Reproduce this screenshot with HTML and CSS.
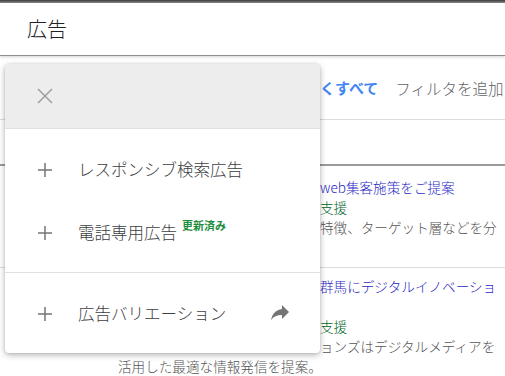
FILE: index.html
```html
<!DOCTYPE html>
<html lang="ja">
<head>
  <meta charset="UTF-8" />
  <meta name="viewport" content="width=device-width, initial-scale=1" />
  <title>広告</title>
  <link rel="stylesheet" href="styles.css">
</head>
<body>
  <div class="topbar"></div>
  <div class="header">広告</div>

  <div class="filters">
    <span class="scope">くすべて</span>
    <span class="add-filter">フィルタを追加</span>
  </div>
  <div class="thead"></div>

  <div class="ad-row first">
    <div class="ln blue"><span class="under"></span>web集客施策をご提案</div>
    <div class="ln green"><span class="under"></span>支援</div>
    <div class="ln gray"><span class="under"></span>特徴、ターゲット層などを分</div>
  </div>
  <div class="ad-row second">
    <div class="ln blue"><span class="under"></span>群馬にデジタルイノベーショ</div>
    <div class="ln"></div>
    <div class="ln green"><span class="under"></span>支援</div>
    <div class="ln gray"><span class="under"></span>ョンズはデジタルメディアを</div>
    <div class="ln gray">活用した最適な情報発信を提案。</div>
  </div>

  <div class="menu">
    <div class="menu-head">
      <svg class="close" width="16" height="16" viewBox="0 0 16 16"><path d="M1 1L15 15M15 1L1 15" stroke="#9e9e9e" stroke-width="1.5" fill="none"/></svg>
    </div>
    <div class="menu-group">
      <div class="item">
        <svg class="plus" width="16" height="16" viewBox="0 0 16 16"><path d="M8 1V15M1 8H15" stroke="#757575" stroke-width="1.5" fill="none"/></svg>
        <span class="label">レスポンシブ検索広告</span>
      </div>
      <div class="item">
        <svg class="plus" width="16" height="16" viewBox="0 0 16 16"><path d="M8 1V15M1 8H15" stroke="#757575" stroke-width="1.5" fill="none"/></svg>
        <span class="label">電話専用広告</span>
        <span class="badge">更新済み</span>
      </div>
    </div>
    <div class="menu-group last">
      <div class="item">
        <svg class="plus" width="16" height="16" viewBox="0 0 16 16"><path d="M8 1V15M1 8H15" stroke="#757575" stroke-width="1.5" fill="none"/></svg>
        <span class="label">広告バリエーション</span>
        <svg class="fwd" width="24" height="24" viewBox="0 0 24 24"><path d="M14 8V4l7 7-7 7v-4.1c-5 0-8.5 1.6-11 5.1 1-5 4-10 11-11z" fill="#757575"/></svg>
      </div>
    </div>
  </div>
</body>
</html>
```

FILE: styles.css
```css
html,body{margin:0;padding:0;overflow:hidden;background:#fff;font-family:'Noto Sans CJK JP','Noto Sans',sans-serif;color:#3c4043;}
body{position:relative;height:376px;}
.topbar{height:3px;background:linear-gradient(#3a3a3a,#8d8d8d);}
.header{height:52px;padding-left:27px;font-size:20px;font-weight:300;line-height:52px;color:#202124;border-bottom:1px solid #8f8f8f;box-shadow:0 1px 3px rgba(0,0,0,.18);}
.filters{height:63px;display:flex;align-items:center;white-space:nowrap;padding-left:320px;border-bottom:1px solid #dcdcdc;}
.scope{font-size:15px;font-weight:700;color:#4285f4;}
.add-filter{margin-left:17px;font-size:15.5px;font-weight:300;color:#5f6368;}
.thead{height:44px;border-bottom:2px solid #9a9a9a;}
.ad-row{padding-left:118px;font-size:13.6px;font-weight:300;line-height:20px;white-space:nowrap;}
.ad-row.first{height:90px;padding-top:11px;border-bottom:1px solid #dcdcdc;}
.ad-row.second{padding-top:8px;}
.ln{height:20px;}
.under{display:inline-block;width:202px;height:1px;}
.blue{color:#2a1fc4;}
.green{color:#006621;}
.gray{color:#545454;}
.menu{position:absolute;left:5px;top:64px;width:315px;height:289px;background:#fff;border-radius:4px;box-shadow:0 2px 6px rgba(0,0,0,.3),0 0 2px rgba(0,0,0,.12);overflow:hidden;}
.menu-head{height:64px;background:#ededed;border-bottom:1px solid #e0e0e0;display:flex;align-items:center;padding-left:32px;}
.menu-group{padding:8px 0 9px;border-bottom:1px solid #e0e0e0;}
.menu-group.last{border-bottom:none;}
.item{height:63px;display:flex;align-items:center;padding-left:32px;padding-right:28px;}
.plus{flex:none;margin-top:2px;}
.label{margin-left:25px;font-size:16.5px;font-weight:300;color:#3c4043;white-space:nowrap;}
.badge{margin-left:5px;margin-top:-13px;font-size:11px;font-weight:700;color:#1e8e3e;white-space:nowrap;}
.fwd{flex:none;margin-left:auto;}
```
